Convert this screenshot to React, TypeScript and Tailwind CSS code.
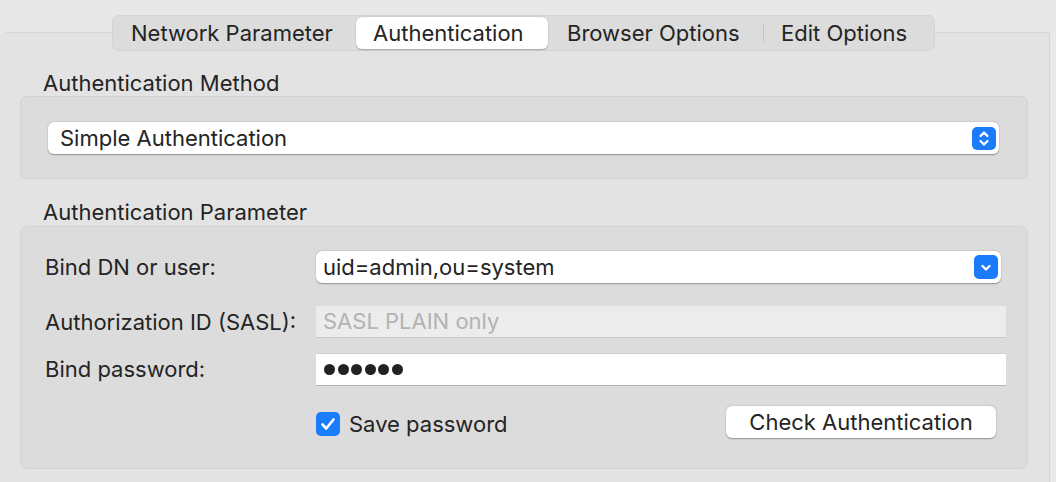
import { useState } from "react";

const TABS = [
  { label: "Network Parameter", width: "w-[243px]", pad: "pl-[18px]" },
  { label: "Authentication", width: "w-[192px]", pad: "pl-[17px]" },
  { label: "Browser Options", width: "w-[215px]", pad: "pl-[19px]" },
  { label: "Edit Options", width: "w-[170px]", pad: "pl-[17px]" },
];

export default function App() {
  const [active, setActive] = useState(1);
  const [savePassword, setSavePassword] = useState(true);

  return (
    <div
      className="h-[482px] w-[1056px] overflow-hidden bg-[#e8e8e8] text-[22px] text-[#242424]"
      style={{ fontFamily: "Inter, 'Liberation Sans', sans-serif" }}
    >
      {/* tab bar sits over the top edge of the box */}
      <div className="relative z-10 ml-[112px] mt-[15px] flex h-[36px] w-[823px] items-center rounded-[7px] border border-[#d3d3d3] bg-[#dcdcdc]">
        {TABS.map((tab, i) => (
          <div key={tab.label} className="flex h-full items-center">
            {i === 3 ? <div className="h-[18px] w-px bg-[#c4c4c4]" /> : null}
            <button
              className={`flex h-full items-center ${tab.width} py-[1px]`}
              onClick={() => setActive(i)}
              type="button"
            >
              <span
                className={`flex h-[32px] w-full items-center whitespace-nowrap ${tab.pad} ${
                  active === i ? "rounded-[6px] bg-white shadow-[0_0.5px_1.5px_rgba(0,0,0,0.25)]" : ""
                }`}
              >
                {tab.label}
              </span>
            </button>
          </div>
        ))}
      </div>

      <div className="-mt-[19px] h-[460px] w-[1050px] rounded-tl-[8px] border border-b-0 border-l-0 border-[#d6d6d6] bg-[#e3e3e3] pl-[20px] pr-[21px] pt-[38px]">
        <div className="pl-[23px] leading-[24px]">Authentication Method</div>
        <div className="mt-[1px] h-[83px] rounded-[7px] border border-[#d2d2d2] bg-[#dcdcdc] pl-[27px] pr-[28px] pt-[25px]">
          <div className="flex h-[32px] items-center justify-between rounded-[6px] bg-white pl-[12px] pr-[3px] shadow-[0_0.5px_1.5px_rgba(0,0,0,0.35)]">
            <span>Simple Authentication</span>
            <span className="flex h-[23px] w-[24px] items-center justify-center rounded-[5px] bg-[#1b7cf9]">
              <svg width="12" height="17" viewBox="0 0 12 17" fill="none" stroke="white" strokeWidth="2.2" strokeLinecap="round" strokeLinejoin="round">
                <path d="M2.5 6 6 2.5 9.5 6" />
                <path d="M2.5 11 6 14.5 9.5 11" />
              </svg>
            </span>
          </div>
        </div>

        <div className="mt-[21px] pl-[23px] leading-[24px]">Authentication Parameter</div>
        <div className="mt-[2px] h-[243px] rounded-[7px] border border-[#d2d2d2] bg-[#dcdcdc] pl-[24px] pt-[24px]">
          <div className="flex h-[32px] items-center">
            <span className="w-[271px]">Bind DN or user:</span>
            <div className="flex h-[32px] w-[685px] items-center justify-between rounded-[6px] bg-white pl-[7px] pr-[3px] shadow-[0_0.5px_1.5px_rgba(0,0,0,0.35)]">
              <span>uid=admin,ou=system</span>
              <span className="flex h-[24px] w-[24px] items-center justify-center rounded-[5px] bg-[#1b7cf9]">
                <svg width="12" height="9" viewBox="0 0 12 9" fill="none" stroke="white" strokeWidth="2.4" strokeLinecap="round" strokeLinejoin="round">
                  <path d="M2.5 3 6 6.5 9.5 3" />
                </svg>
              </span>
            </div>
          </div>

          <div className="mt-[23px] flex h-[32px] items-center">
            <span className="w-[271px]">Authorization ID (SASL):</span>
            <div className="flex h-[32px] w-[690px] items-center border-b border-[#c9c9c9] bg-[#ececec] pl-[7px] text-[#b3b3b3]">
              SASL PLAIN only
            </div>
          </div>

          <div className="mt-[15px] flex h-[33px] items-center">
            <span className="w-[271px]">Bind password:</span>
            <div className="flex h-[33px] w-[690px] items-center gap-[2.5px] border-b border-t border-b-[#b4b4b4] border-t-[#d0d0d0] bg-white pl-[8px]">
              {[0, 1, 2, 3, 4, 5].map((n) => (
                <span key={n} className="h-[11px] w-[11px] rounded-full bg-[#222]" />
              ))}
            </div>
          </div>

          <div className="mt-[20px] flex h-[32px] items-center">
            <label className="ml-[271px] flex cursor-pointer items-center gap-[9px] pt-[4px]">
              <input
                checked={savePassword}
                className="hidden"
                onChange={() => setSavePassword(!savePassword)}
                type="checkbox"
              />
              <span className="flex h-[24px] w-[24px] items-center justify-center rounded-[5px] bg-[#1b7cf9]">
                {savePassword ? (
                  <svg width="16" height="14" viewBox="0 0 16 14" fill="none" stroke="white" strokeWidth="2.6" strokeLinecap="round" strokeLinejoin="round">
                    <path d="M2.5 7.5 6.2 11.5 13.5 2.5" />
                  </svg>
                ) : null}
              </span>
              <span>Save password</span>
            </label>
            <button
              className="ml-auto mr-[31px] h-[32px] w-[270px] rounded-[6px] bg-white shadow-[0_0.5px_1.5px_rgba(0,0,0,0.35)]"
              type="button"
            >
              Check Authentication
            </button>
          </div>
        </div>
      </div>
    </div>
  );
}
